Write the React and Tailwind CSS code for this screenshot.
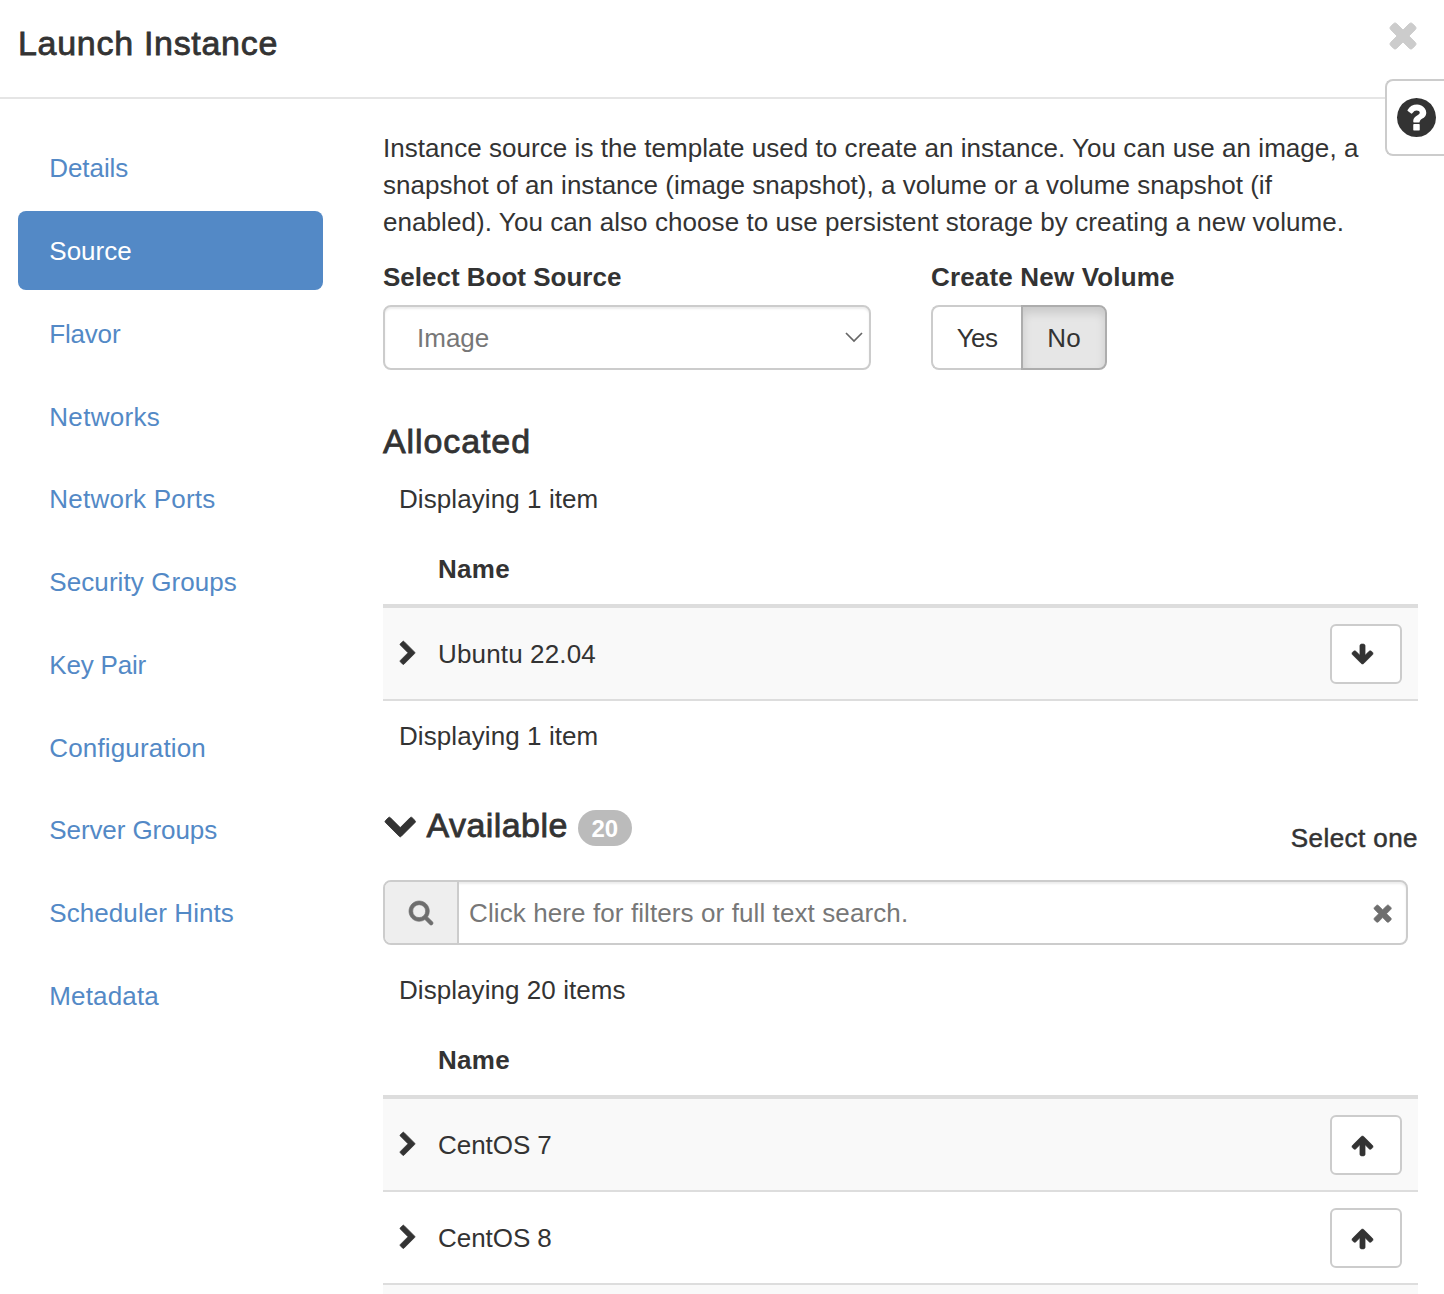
import React from 'react';

const ICONS = {
  times: ['302 366 1188 1188', 'M1490 1322q0 40-28 68l-136 136q-28 28-68 28t-68-28l-294-294-294 294q-28 28-68 28t-68-28l-136-136q-28-28-28-68t28-68l294-294-294-294q-28-28-28-68t28-68l136-136q28-28 68-28t68 28l294 294 294-294q28-28 68-28t68 28l136 136q28 28 28 68t-28 68l-294 294 294 294q28 28 28 68z'],
  question: ['128 128 1536 1536', 'M1024 1376v-192q0-14-9-23t-23-9h-192q-14 0-23 9t-9 23v192q0 14 9 23t23 9h192q14 0 23-9t9-23zm256-672q0-88-55.5-163t-138.5-116-170-41q-243 0-371 213-15 24 8 42l132 100q7 6 19 6 16 0 25-12 53-68 86-92 34-24 86-24 48 0 85.5 26t37.5 59q0 38-20 61t-68 45q-63 28-115.5 86.5t-52.5 125.5v36q0 14 9 23t23 9h192q14 0 23-9t9-23q0-19 21.5-49.5t54.5-49.5q32-18 49-28.5t46-35 44.5-48 28-60.5 12.5-81zm384 192q0 209-103 385.5t-279.5 279.5-385.5 103-385.5-103-279.5-279.5-103-385.5 103-385.5 279.5-279.5 385.5-103 385.5 103 279.5 279.5 103 385.5z'],
  right: ['346 19 1036 1620', 'M1363 877l-742 742q-19 19-45 19t-45-19l-166-166q-19-19-19-45t19-45l531-531-531-531q-19-19-19-45t19-45l166-166q19-19 45-19t45 19l742 742q19 19 19 45t-19 45z'],
  down: ['90 532 1612 1036', 'M1683 808l-742 741q-19 19-45 19t-45-19l-742-741q-19-19-19-45.5t19-45.5l166-165q19-19 45-19t45 19l531 531 531-531q19-19 45-19t45 19l166 165q19 19 19 45.5t-19 45.5z'],
  search: ['64 128 1664 1664', 'M1216 832q0-185-131.5-316.5t-316.5-131.5-316.5 131.5-131.5 316.5 131.5 316.5 316.5 131.5 316.5-131.5 131.5-316.5zm512 832q0 52-38 90t-90 38q-54 0-90-38l-343-342q-179 124-399 124-143 0-273.5-55.5t-225-150-150-225-55.5-273.5 55.5-273.5 150-225 225-150 273.5-55.5 273.5 55.5 225 150 150 225 55.5 273.5q0 220-124 399l343 343q37 37 37 90z'],
  arrowUp: ['117 192 1558 1472', 'M1675 971q0 51-37 90l-75 75q-38 38-91 38-54 0-90-38l-294-293v704q0 52-37.5 84.5t-90.5 32.5h-128q-53 0-90.5-32.5t-37.5-84.5v-704l-294 293q-36 38-90 38t-90-38l-75-75q-38-38-38-90 0-53 38-91l651-651q35-37 90-37 54 0 91 37l651 651q37 39 37 91z'],
  arrowDown: ['117 128 1558 1483', 'M1675 832q0 53-37 90l-651 652q-39 37-91 37-53 0-90-37l-651-652q-38-36-38-90 0-53 38-91l74-75q39-37 91-37 53 0 90 37l294 294v-704q0-52 38-90t90-38h128q52 0 90 38t38 90v704l294-294q37-37 90-37 52 0 91 37l75 75q37 39 37 91z'],
};

function Icon({ name, className }) {
  const [viewBox, d] = ICONS[name];
  return (
    <svg
      viewBox={viewBox}
      className={`overflow-visible ${className}`}
      fill="currentColor"
      stroke="currentColor"
      strokeWidth={name === 'question' ? 0 : 44}
      strokeLinejoin="round"
      aria-hidden="true"
    >
      <path d={d} />
    </svg>
  );
}

const STEPS = [
  ['Details', 'tracking-[-0.08px]'],
  ['Source', 'tracking-[0px]'],
  ['Flavor', 'tracking-[-0.2px]'],
  ['Networks', 'tracking-[0.3px]'],
  ['Network Ports', 'tracking-[0.23px]'],
  ['Security Groups', 'tracking-[0.08px]'],
  ['Key Pair', 'tracking-[-0.2px]'],
  ['Configuration', 'tracking-[0.15px]'],
  ['Server Groups', 'tracking-[-0.1px]'],
  ['Scheduler Hints', 'tracking-[0.07px]'],
  ['Metadata', 'tracking-[0.15px]'],
];

function ImageTable({ children }) {
  return (
    <div>
      <div className="flex h-[70px] items-center pl-[55px] font-bold tracking-[0.3px]">Name</div>
      <div className="border-t-4 border-[#ddd]">{children}</div>
    </div>
  );
}

function ImageRow({ name, icon, className, iconClass = '' }) {
  return (
    <div className={`flex h-[93px] items-center border-b-2 border-[#ddd] pt-px pr-4 pl-[17px] ${className}`}>
      <Icon name="right" className="mt-[-3px] h-[23.5px] w-[15px]" />
      <span className="ml-[23px] flex-1">{name}</span>
      <button className="flex h-[60px] w-[72px] items-center rounded-md border-2 border-[#ccc] bg-white pl-5">
        <Icon name={icon} className={`h-5 w-[21px] ${iconClass}`} />
      </button>
    </div>
  );
}

export default function App() {
  return (
    <div className="relative flex h-[1294px] w-[1444px] flex-col overflow-hidden bg-white font-['Liberation_Sans',Arial,sans-serif] text-[26px] leading-[37px] text-[#333]">
      <header className="flex h-[99px] shrink-0 items-start justify-between border-b-2 border-[#e5e5e5] pr-7 pl-[18px]">
        <h1 className="mt-[25px] text-[34px] tracking-[0.7px] [-webkit-text-stroke:0.8px_#333]">Launch Instance</h1>
        <Icon name="times" className="mt-[22.5px] mr-[0.5px] size-[26px] text-[#ccc]" />
      </header>

      <div className="flex min-h-0 flex-1">
        <nav className="flex w-[323px] shrink-0 flex-col gap-1 pt-[29px] pl-[18px]">
          {STEPS.map(([label, tracking]) => (
            <a
              key={label}
              className={`flex h-[78.75px] shrink-0 items-center rounded-lg pt-[2.95px] pl-[31.3px] ${tracking} ${
                label === 'Source' ? 'bg-[#5389c6] text-white' : 'text-[#5389c6]'
              }`}
            >
              {label}
            </a>
          ))}
        </nav>

        <main className="ml-[60px] w-[1035px] shrink-0 pt-[31px]">
          <p className="whitespace-nowrap">
            <span className="block tracking-[0.05px]">Instance source is the template used to create an instance. You can use an image, a</span>
            <span className="block tracking-[0.02px]">snapshot of an instance (image snapshot), a volume or a volume snapshot (if</span>
            <span className="block tracking-[0.07px]">enabled). You can also choose to use persistent storage by creating a new volume.</span>
          </p>

          <div className="mt-[18px] flex gap-[60px]">
            <div className="w-[488px]">
              <div className="font-bold">Select Boot Source</div>
              <div className="mt-[9px] flex h-[65px] items-center justify-between rounded-lg border-2 border-[#ccc] pt-px pr-[6px] pl-8 text-[#777] shadow-[inset_0_2px_2px_rgba(0,0,0,0.075)]">
                Image
                <svg viewBox="0 0 18 11" className="mt-[-1px] h-[11px] w-[18px]" fill="none" stroke="#666" strokeWidth="1.7">
                  <path d="M1 1l8 8 8-8" />
                </svg>
              </div>
            </div>
            <div>
              <div className="font-bold tracking-[0.17px]">Create New Volume</div>
              <div className="mt-[9px] flex h-[65px] w-[176px]">
                <button className="w-[90px] rounded-l-lg border-2 border-r-0 border-[#ccc] pt-px tracking-[-0.6px]">Yes</button>
                <button className="w-[86px] rounded-r-lg border-2 border-[#adadad] bg-[#e6e6e6] pt-px tracking-[0.2px] shadow-[inset_0_6px_10px_rgba(0,0,0,0.125)]">No</button>
              </div>
            </div>
          </div>

          <h2 className="mt-[53px] text-[34px] tracking-[0.9px] [-webkit-text-stroke:0.8px_#333]">Allocated</h2>
          <div className="mt-[21px] pl-4 tracking-[0.08px]">Displaying 1 item</div>
          <div className="mt-[16px]">
            <ImageTable>
              <ImageRow name="Ubuntu 22.04" icon="arrowDown" className="bg-[#f9f9f9] tracking-[0.15px]" />
            </ImageTable>
          </div>
          <div className="mt-[17px] pl-4 tracking-[0.08px]">Displaying 1 item</div>

          <div className="mt-[52px] flex h-[54px] justify-between">
            <div className="flex h-[40px] items-center">
              <Icon name="down" className="ml-[2px] h-[20px] w-[30.5px]" />
              <h2 className="mt-[-4px] ml-[11px] text-[34px] tracking-[0.43px] [-webkit-text-stroke:0.8px_#333]">Available</h2>
              <span className="mt-[2px] ml-[10px] flex h-9 w-[54px] items-center justify-center rounded-full bg-[#bbb] pt-[2px] text-2xl leading-9 font-bold text-white">20</span>
            </div>
            <span className="mt-[13px] tracking-[0.43px] [-webkit-text-stroke:0.5px_#333]">Select one</span>
          </div>

          <div className="mt-[19px] flex h-[65px] w-[1025px] rounded-lg border-2 border-[#ccc] text-[#6e6e6e] shadow-[inset_0_2px_2px_rgba(0,0,0,0.075)]">
            <span className="flex w-[74px] items-center justify-center rounded-l-md border-r-2 border-[#ccc] bg-[#eee] pt-px">
              <Icon name="search" className="size-6" />
            </span>
            <span className="flex flex-1 items-center justify-between pt-[2px] pr-[15px] pl-[10px] tracking-[0.1px]">
              <span className="text-[#777]">Click here for filters or full text search.</span>
              <Icon name="times" className="size-[17.3px]" />
            </span>
          </div>

          <div className="mt-[27px] pl-4 tracking-[0.06px]">Displaying 20 items</div>
          <div className="mt-[16px]">
            <ImageTable>
              <ImageRow name="CentOS 7" icon="arrowUp" iconClass="mt-[2px]" className="bg-[#f9f9f9] tracking-[-0.05px]" />
              <ImageRow name="CentOS 8" icon="arrowUp" iconClass="mt-[2px]" className="bg-white tracking-[-0.05px]" />
              <div className="h-3 bg-[#f9f9f9]" />
            </ImageTable>
          </div>
        </main>
      </div>

      <button className="absolute top-[79px] right-0 flex h-[77px] w-[59px] items-center rounded-l-lg border-2 border-r-0 border-[#ccc] bg-white pl-[10px]">
        <Icon name="question" className="size-[39px]" />
      </button>
    </div>
  );
}
